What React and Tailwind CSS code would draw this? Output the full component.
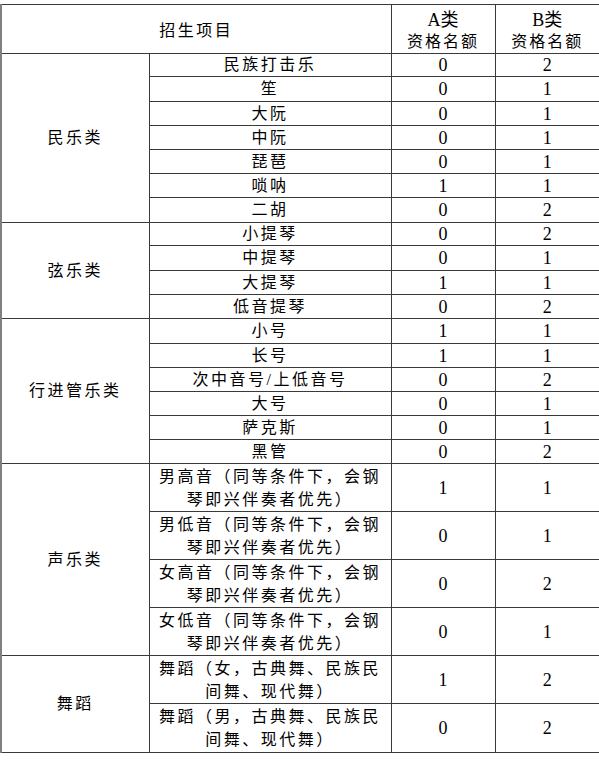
const groups = [
  {
    name: "民乐类",
    rows: [
      { item: "民族打击乐", a: 0, b: 2, h: 23 },
      { item: "笙", a: 0, b: 1, h: 25 },
      { item: "大阮", a: 0, b: 1, h: 24 },
      { item: "中阮", a: 0, b: 1, h: 24 },
      { item: "琵琶", a: 0, b: 1, h: 24 },
      { item: "唢呐", a: 1, b: 1, h: 24 },
      { item: "二胡", a: 0, b: 2, h: 25 },
    ],
  },
  {
    name: "弦乐类",
    rows: [
      { item: "小提琴", a: 0, b: 2, h: 23 },
      { item: "中提琴", a: 0, b: 1, h: 25 },
      { item: "大提琴", a: 1, b: 1, h: 24 },
      { item: "低音提琴", a: 0, b: 2, h: 24 },
    ],
  },
  {
    name: "行进管乐类",
    rows: [
      { item: "小号", a: 1, b: 1, h: 25 },
      { item: "长号", a: 1, b: 1, h: 24 },
      { item: "次中音号/上低音号", a: 0, b: 2, h: 24 },
      { item: "大号", a: 0, b: 1, h: 24 },
      { item: "萨克斯", a: 0, b: 1, h: 24 },
      { item: "黑管", a: 0, b: 2, h: 24 },
    ],
  },
  {
    name: "声乐类",
    rows: [
      { item: ["男高音（同等条件下，会钢", "琴即兴伴奏者优先）"], a: 1, b: 1, h: 48 },
      { item: ["男低音（同等条件下，会钢", "琴即兴伴奏者优先）"], a: 0, b: 1, h: 48 },
      { item: ["女高音（同等条件下，会钢", "琴即兴伴奏者优先）"], a: 0, b: 2, h: 48 },
      { item: ["女低音（同等条件下，会钢", "琴即兴伴奏者优先）"], a: 0, b: 1, h: 48 },
    ],
  },
  {
    name: "舞蹈",
    rows: [
      { item: ["舞蹈（女，古典舞、民族民", "间舞、现代舞）"], a: 1, b: 2, h: 48 },
      { item: ["舞蹈（男，古典舞、民族民", "间舞、现代舞）"], a: 0, b: 2, h: 49 },
    ],
  },
];

const heights = {
  23: "h-[23px]",
  24: "h-[24px]",
  25: "h-[25px]",
  48: "h-[48px]",
  49: "h-[49px]",
};

const cell = "border border-[#3a3a3a] p-0 text-center align-middle leading-[20px]";

export default function App() {
  return (
    <div className="min-h-[764px] w-[599px] bg-white pt-[4px] font-['Liberation_Serif','Noto_Sans_CJK_SC',serif] leading-[20px] text-black">
      <table className="w-[599px] table-fixed border-collapse">
        <colgroup>
          <col className="w-[148px]" />
          <col className="w-[242px]" />
          <col className="w-[104px]" />
          <col className="w-[105px]" />
        </colgroup>
        <thead>
          <tr className="h-[49px]">
            <th colSpan={2} className={`${cell} border-l-2 border-l-[#808080] pt-[3px] text-[16px] font-normal tracking-[2.5px]`}>
              招生项目
            </th>
            <th className={`${cell} pt-[4px] text-[16px] font-normal !leading-[22px] tracking-[2px]`}>
              <div className="text-[18px] tracking-normal">A类</div>
              <div>资格名额</div>
            </th>
            <th className={`${cell} border-r-2 pt-[4px] text-[16px] font-normal !leading-[22px] tracking-[2px]`}>
              <div className="text-[18px] tracking-normal">B类</div>
              <div>资格名额</div>
            </th>
          </tr>
        </thead>
        <tbody>
          {groups.map((g) =>
            g.rows.map((r, i) => (
              <tr key={g.name + i} className={heights[r.h]}>
                {i === 0 && (
                  <td
                    rowSpan={g.rows.length}
                    className={`${cell} border-l-2 border-l-[#808080] text-[16px] tracking-[2.5px]`}
                  >
                    {g.name}
                  </td>
                )}
                <td className={`${cell} text-[16px] tracking-[2.5px]`}>
                  {Array.isArray(r.item) ? (
                    <div className="leading-[23px]">
                      <div>{r.item[0]}</div>
                      <div>{r.item[1]}</div>
                    </div>
                  ) : (
                    r.item
                  )}
                </td>
                <td className={`${cell} text-[18px]`}>{r.a}</td>
                <td className={`${cell} border-r-2 text-[18px]`}>{r.b}</td>
              </tr>
            ))
          )}
        </tbody>
      </table>
    </div>
  );
}
